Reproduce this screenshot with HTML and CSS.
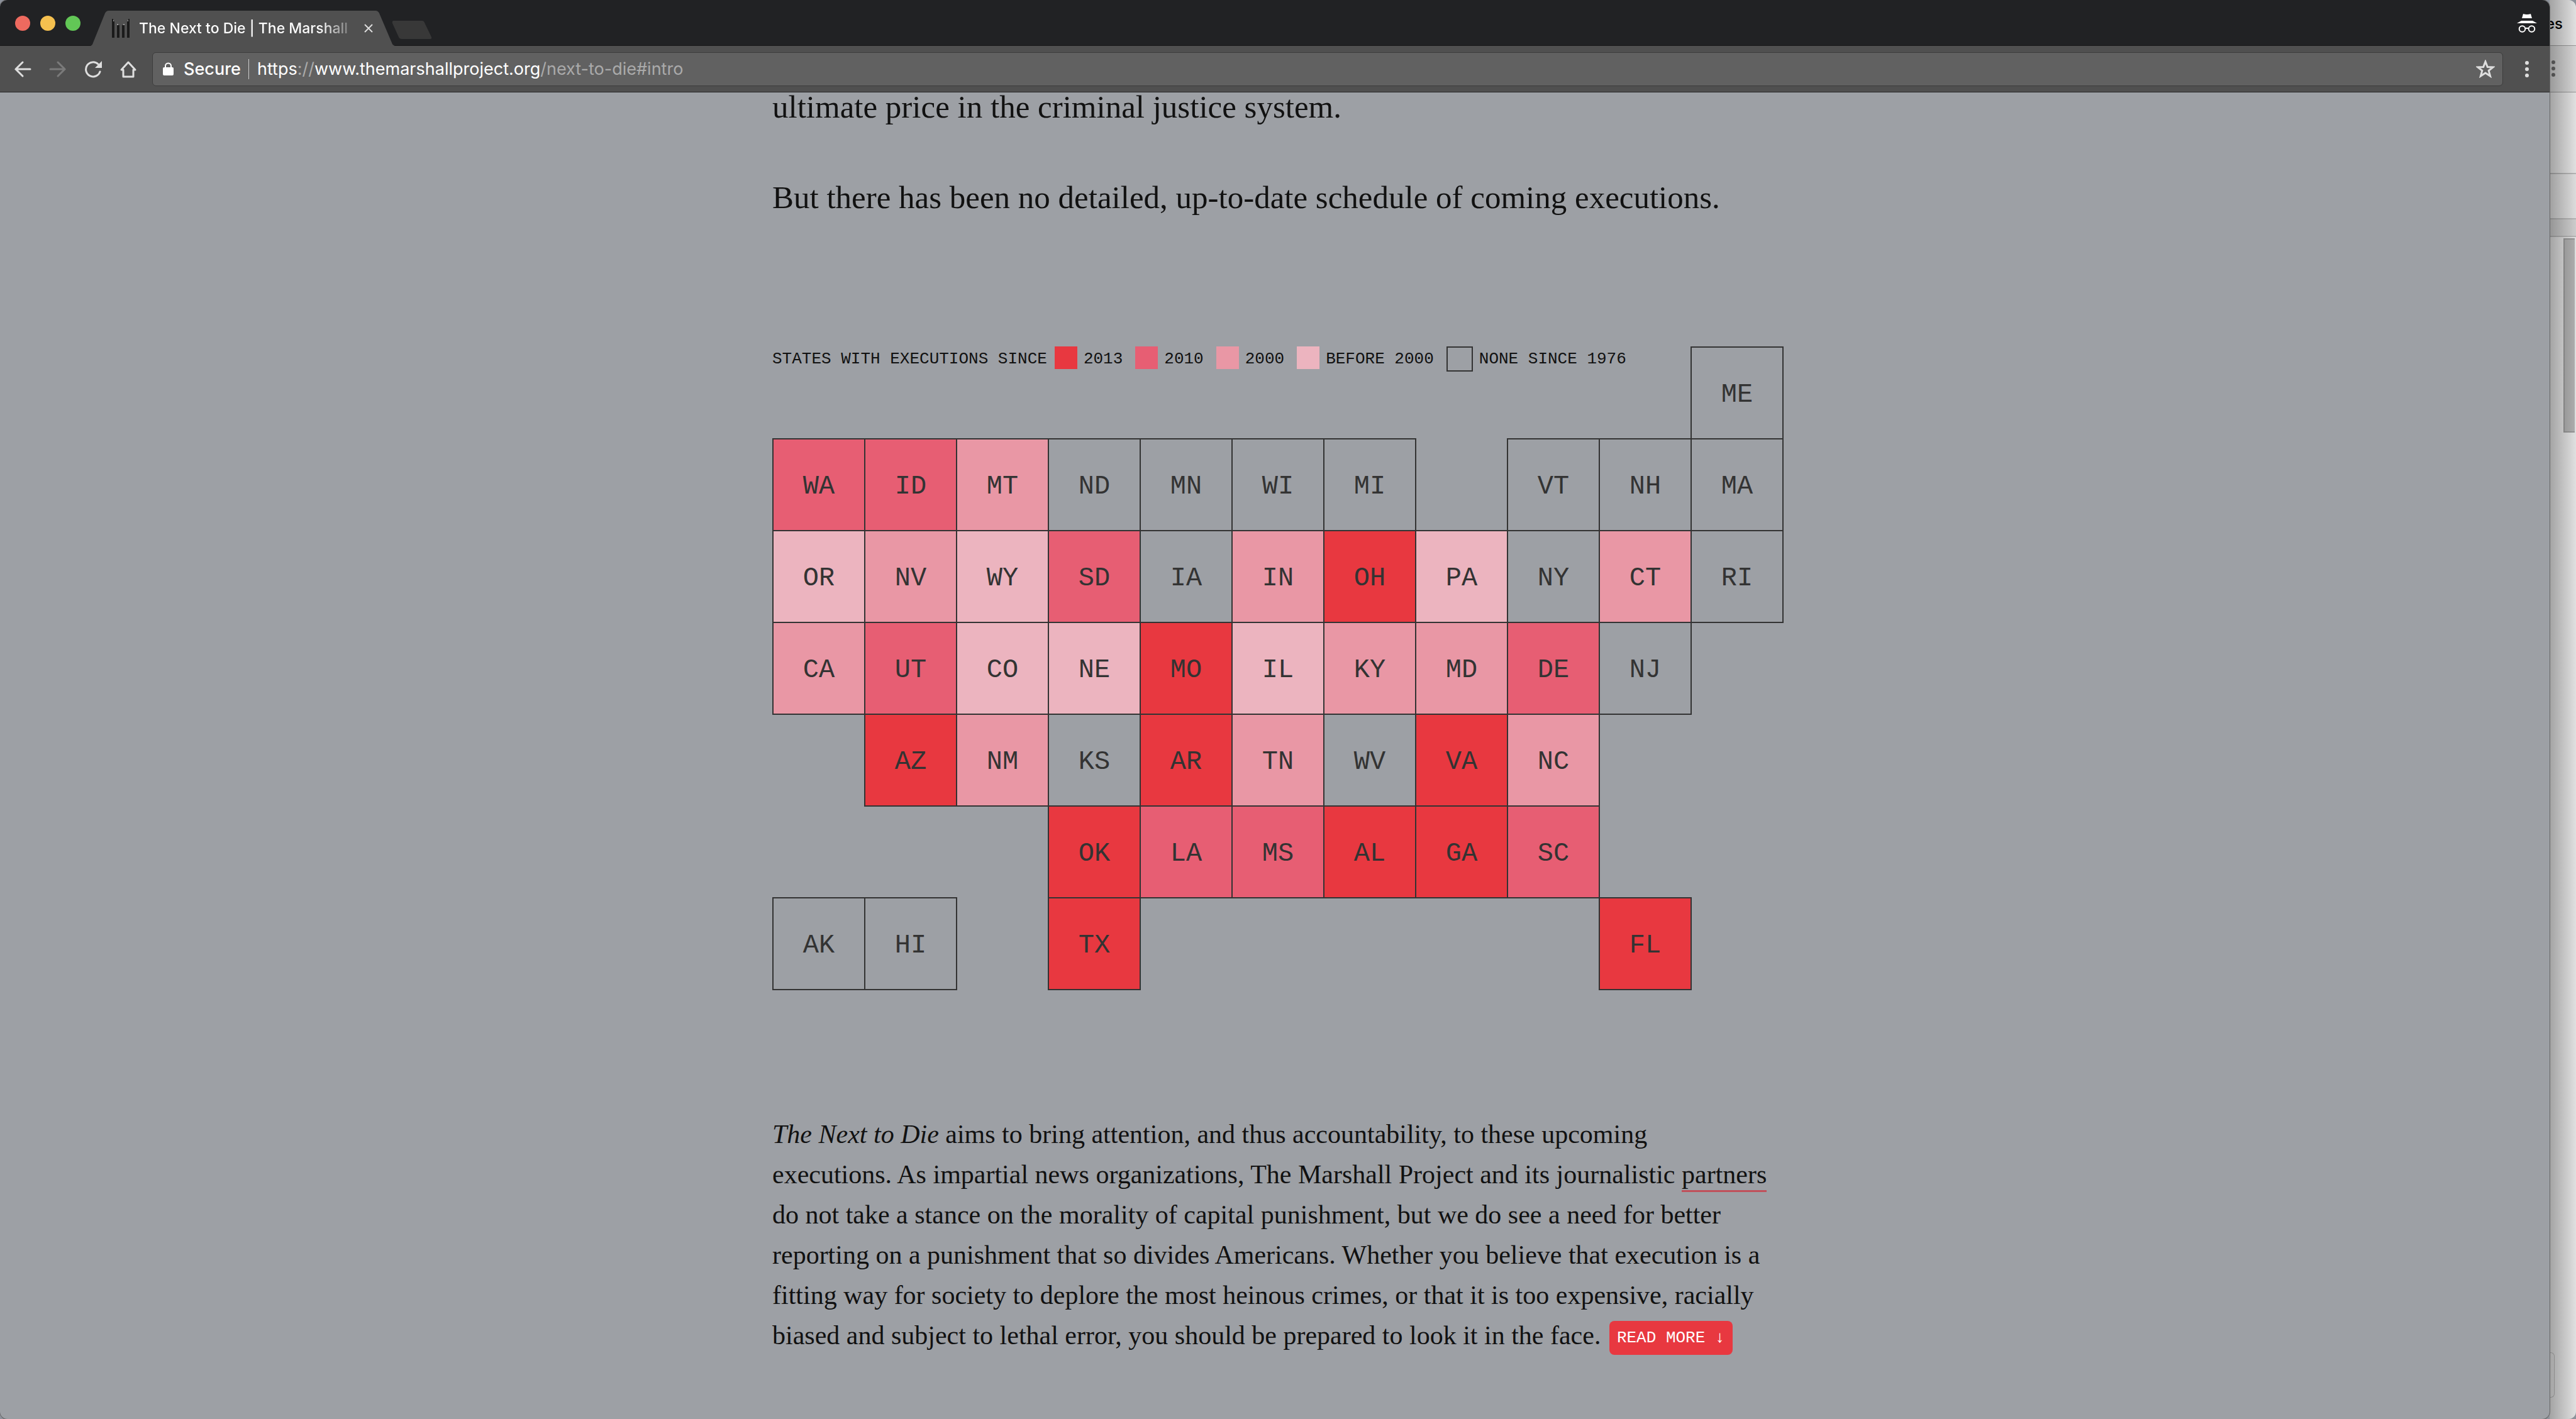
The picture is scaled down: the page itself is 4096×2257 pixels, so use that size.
FILE: index.html
```html
<!DOCTYPE html>
<html lang="en">
<head>
<meta charset="utf-8">
<title>The Next to Die | The Marshall Project</title>
<link rel="stylesheet" href="styles.css">
</head>
<body>
<div class="desktop">
  <div class="window">
    <header class="tabstrip">
      <div class="lights"><span class="light light-close"></span><span class="light light-min"></span><span class="light light-max"></span></div>
      <div class="tab">
        <svg class="tab-shape" viewBox="0 0 484 56" preserveAspectRatio="none" aria-hidden="true"><path d="M0 56 Q3 55 4 51 L23 4 Q25 0 29 0 H453 Q457 0 459 4 L479 51 Q480 55 484 56Z" fill="#505050"/></svg>
        <svg class="favicon" viewBox="0 0 28 30" aria-hidden="true"><path d="M0 0h2v4h2v26H0zM8 10h4v20H8zM16 10h4v20h-4zM24 4h2V0h2v30h-4z" fill="#1b1b1b"/><path d="M2 2h1v2H2zM8 8h2v2H8zM18 8h2v2h-2zM25 2h1v2h-1z" fill="#999"/></svg>
        <span class="tab-title">The Next to Die | The Marshall</span>
        <button class="tab-close" aria-label="Close tab"><svg viewBox="0 0 14 14"><path d="M1 1l12 12M13 1L1 13" stroke="#ddd" stroke-width="2" fill="none"/></svg></button>
      </div>
      <button class="newtab" aria-label="New tab"><svg viewBox="0 0 64 30"><path d="M3 0H48Q51 0 52 3L63 26Q64 29 61 29H16Q12 29 11 26L1 4Q0 0 3 0Z" fill="#383838"/></svg></button>
      <svg class="incognito" viewBox="0 0 32 30" role="img" aria-label="Incognito"><path d="M10 0Q16 2 22 0L24 7H8ZM7 11H25L32 15H0Z" fill="#fff"/><g fill="none" stroke="#fff" stroke-width="2"><circle cx="8.500" cy="24" r="4.800"/><circle cx="23.500" cy="24" r="4.800"/><path d="M13 23.500Q16 22 19 23.500"/></g></svg>
    </header>
    <nav class="toolbar">
      <button class="tool" aria-label="Back"><svg viewBox="0 0 28 28"><path d="M26 14H3M14 3L3 14l11 11" fill="none" stroke="#dedede" stroke-width="3" stroke-linecap="round"/></svg></button>
      <button class="tool" aria-label="Forward"><svg viewBox="0 0 28 28"><path d="M2 14h23M14 3l11 11-11 11" fill="none" stroke="#7a7a7a" stroke-width="3" stroke-linecap="round"/></svg></button>
      <button class="tool" aria-label="Reload"><svg viewBox="0 0 28 28"><path d="M25 18A11.500 11.500 0 1 1 22 6" fill="none" stroke="#dedede" stroke-width="3" stroke-linecap="round"/><path d="M28 1v11H17Z" fill="#dedede"/></svg></button>
      <button class="tool" aria-label="Home"><svg viewBox="0 0 28 28"><path d="M14 3L3 15H6V26H22V15H25Z" fill="none" stroke="#dedede" stroke-width="3" stroke-linejoin="round"/></svg></button>
      <div class="omnibox">
        <svg class="lock" viewBox="0 0 17 21" aria-hidden="true"><path d="M4 9V6a4.500 4.500 0 0 1 9 0v3" fill="none" stroke="#fff" stroke-width="2"/><rect y="8" width="17" height="13" rx="2" fill="#fff"/></svg>
        <span class="secure">Secure</span>
        <div class="url">https<i>://</i>www.themarshallproject.org<i>/next-to-die#intro</i></div>
        <button class="star" aria-label="Bookmark"><svg viewBox="0 0 30 29"><path d="M15 3l3.300 8.500 8.700.4-6.800 5.500 2.400 8.600L15 21l-7.600 5 2.400-8.600L3 11.900l8.700-.4z" fill="none" stroke="#dedede" stroke-width="3"/></svg></button>
      </div>
      <button class="kebab" aria-label="Menu"><svg viewBox="0 0 6 26"><g fill="#dedede"><circle cx="3" cy="3" r="3"/><circle cx="3" cy="13" r="3"/><circle cx="3" cy="23" r="3"/></g></svg></button>
    </nav>
    <main class="page">
      <article class="column">
        <p class="lead">ultimate price in the criminal justice system.</p>
        <p class="lead">But there has been no detailed, up-to-date schedule of coming executions.</p>
        <section class="map">
          <div class="legend">
            <span class="legend-label">STATES WITH EXECUTIONS SINCE</span>
            <span class="key"><i class="swatch y2013"></i>2013</span>
            <span class="key"><i class="swatch y2010"></i>2010</span>
            <span class="key"><i class="swatch y2000"></i>2000</span>
            <span class="key"><i class="swatch before"></i>BEFORE 2000</span>
            <span class="key"><i class="swatch none"></i>NONE SINCE 1976</span>
          </div>
          <div class="states" id="states"></div>
        </section>
        <p class="about"><em>The Next to Die</em> aims to bring attention, and thus accountability, to these upcoming<br>
executions. As impartial news organizations, The Marshall Project and its journalistic <a href="#partners">partners</a><br>
do not take a stance on the morality of capital punishment, but we do see a need for better<br>
reporting on a punishment that so divides Americans. Whether you believe that execution is a<br>
fitting way for society to deplore the most heinous crimes, or that it is too expensive, racially<br>
biased and subject to lethal error, you should be prepared to look it in the face. <button class="more">READ MORE ↓</button></p>
      </article>
    </main>
  </div>
  <aside class="behind">
    <div class="b-tab">es</div>
    <div class="b-tools"><svg viewBox="0 0 6 26"><g fill="#777"><circle cx="3" cy="3" r="3"/><circle cx="3" cy="13" r="3"/><circle cx="3" cy="23" r="3"/></g></svg></div>
    <div class="b-row b-tall"></div>
    <div class="b-row b-mid"></div>
    <div class="b-row b-thin"></div>
    <div class="b-body"><div class="b-thumb"></div><div class="b-card"></div></div>
  </aside>
</div>
<script src="map.js"></script>
</body>
</html>
```
FILE: map.js
```
// Each row lists its states left to right; "-" is an empty cell.
// The suffix is the period of the latest execution: 3 = 2013, 1 = 2010, 2 = 2000, b = before 2000.
const rows = [
  "- - - - - - - - - - ME",
  "WA1 ID1 MT2 ND MN WI MI - VT NH MA",
  "ORb NV2 WYb SD1 IA IN2 OH3 PAb NY CT2 RI",
  "CA2 UT1 COb NEb MO3 ILb KY2 MD2 DE1 NJ -",
  "- AZ3 NM2 KS AR3 TN2 WV VA3 NC2 - -",
  "- - - OK3 LA1 MS1 AL3 GA3 SC1 - -",
  "AK HI - TX3 - - - - - FL3 -"
];
const classes = { 3: "y2013", 1: "y2010", 2: "y2000", b: "before" };
const grid = document.getElementById("states");
rows.forEach((row) => row.split(" ").forEach((cell) => {
  const el = document.createElement("div");
  if (cell !== "-") {
    el.className = "state " + (classes[cell[2]] || "none");
    el.textContent = cell.slice(0, 2);
  }
  grid.append(el);
}));
```
FILE: styles.css
```css
* { box-sizing: border-box; }
body { margin: 0; background: #8d929b; font-family: Inter, "Liberation Sans", sans-serif; }
button { border: 0; padding: 0; background: none; font: inherit; color: inherit; display: block; }
svg { display: block; width: 100%; height: 100%; }
i { font-style: normal; }

.desktop { display: grid; grid-template-columns: minmax(0, 1fr) 42px; min-height: 100vh; overflow: hidden; }
.window { position: relative; z-index: 1; display: flex; flex-direction: column; border-radius: 12px; overflow: hidden; background: #9da0a5; box-shadow: 0 0 0 1px #666; }

.tabstrip { display: flex; height: 73px; background: #212224; border-bottom: 1px solid #191919; }
.lights { display: flex; gap: 16px; padding: 25px 0 0 24px; width: 144px; flex: none; }
.light { width: 24px; height: 24px; border-radius: 50%; }
.light-close { background: #ee6a5f; }
.light-min { background: #f5c04f; }
.light-max { background: #62c756; }
.tab { position: relative; display: flex; align-items: center; width: 484px; height: 56px; margin-top: 17px; padding-left: 34px; }
.tab-shape { position: absolute; inset: 0; }
.favicon { position: relative; flex: none; width: 28px; height: 30px; }
.tab-title { position: relative; flex: none; margin-left: 15px; width: 350px; white-space: nowrap; font-size: 23px; font-weight: 500; line-height: 32px; color: transparent; background: linear-gradient(to right, #fff 82%, #666 98%); background-clip: text; }
.tab-close { position: relative; flex: none; width: 14px; height: 14px; margin-left: 8px; }
.newtab { width: 64px; height: 30px; margin: 33px 0 0 -5px; }
.incognito { width: 32px; height: 30px; margin: 22px 20px 0 auto; }

.toolbar { display: flex; align-items: center; height: 74px; padding: 0 33px 0 22px; background: #505050; border-bottom: 1px solid #262626; }
.tool { width: 28px; height: 28px; margin-right: 28px; }
.tool:nth-of-type(4) { margin-right: 24px; }
.omnibox { flex: 1; display: flex; align-items: center; height: 54px; padding: 0 12px 0 16px; background: #616161; border: 1px solid #3c3c3c; border-radius: 6px; color: #fff; font-size: 27px; line-height: 32px; }
.lock { width: 17px; height: 21px; margin-right: 16px; }
.secure { padding-right: 12px; border-right: 1px solid #ccc; font-weight: 500; }
.url { flex: 1; padding-left: 13px; }
.url i { color: #aaa; }
.star { width: 30px; height: 29px; }
.kebab { width: 6px; height: 26px; margin-left: 35px; }

.page { flex: 1; }
.column { max-width: 1598px; margin: 0 auto; color: #111; font-family: "Liberation Serif", serif; white-space: nowrap; }
.lead { margin: 0 0 98px; font-size: 51px; line-height: 46px; }
.map { position: relative; margin-top: 214px; font-family: "Liberation Mono", monospace; }
.legend { position: absolute; display: flex; height: 40px; font-size: 26px; line-height: 40px; }
.legend-label { margin-right: 12px; }
.key { display: flex; gap: 10px; margin-right: 20px; }
.swatch { width: 36px; height: 36px; }
.swatch.none { width: 42px; height: 40px; }
.states { display: grid; grid-template-columns: repeat(11, 146px); grid-auto-rows: 146px; color: #333; font-size: 42px; line-height: 150px; text-align: center; }
.state { width: 148px; height: 148px; border: 2px solid #333; }
.y2013 { background: #e83840; }
.y2010 { background: #e75e73; }
.y2000 { background: #e997a5; }
.before { background: #ecb4bf; }
.none { border: 2px solid #333; }
.about { margin: 199px 0 80px; font-size: 42px; line-height: 64px; }
.about a { color: inherit; text-decoration: none; border-bottom: 3px solid #c0505a; padding-bottom: 2px; }
.more { display: inline-block; height: 54px; padding: 0 12px; margin-left: 3px; border-radius: 8px; background: #e83840; color: #fff; font: 26px/54px "Liberation Mono", monospace; vertical-align: middle; }

.behind { position: relative; display: flex; flex-direction: column; border-radius: 0 12px 12px 0; background: #fff; overflow: hidden; }
.behind::after { content: ""; position: absolute; inset: 0; background: linear-gradient(to right, rgba(0,0,0,.36), rgba(0,0,0,.12)); }
.b-tab { height: 73px; padding-top: 20px; margin-left: -6px; border-bottom: 1px solid #aaa; font-size: 24px; font-weight: 500; line-height: 36px; color: #000; }
.b-tools { height: 74px; padding: 23px 0 0 3px; background: #f0f0f0; border-bottom: 1px solid #aaa; }
.b-tools svg { width: 6px; height: 26px; }
.b-row { border-bottom: 2px solid #ccc; }
.b-tall { height: 130px; }
.b-mid { height: 72px; background: #fafafa; }
.b-thin { height: 28px; background: #e8e8e8; }
.b-body { flex: 1; display: flex; flex-direction: column; justify-content: space-between; }
.b-thumb { width: 18px; height: 309px; margin: 2px 0 0 22px; background: #c6c6c6; border: 2px solid #aaa; border-right: 0; }
.b-card { width: 8px; height: 72px; margin-bottom: 34px; border: 1px solid #ccc; border-left: 0; border-radius: 0 6px 6px 0; }
```
